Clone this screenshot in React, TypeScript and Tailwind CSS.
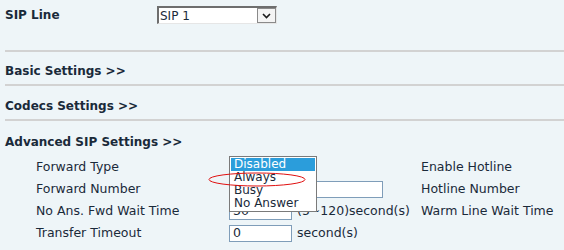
import React from "react";

const font = { fontFamily: '"DejaVu Sans", Verdana, sans-serif' };

function Input({ w, value }: { w: string; value?: string }) {
  return (
    <div
      className={`${w} h-[17px] bg-white border border-[#7f9db9] flex items-center pl-[3px] text-[12.5px] text-[#1a2a3a] leading-none`}
    >
      {value}
    </div>
  );
}

export default function App() {
  return (
    <div
      className="relative w-[564px] h-[250px] bg-[#eef5f8] overflow-hidden text-[#1a2a3a]"
      style={font}
    >
      {/* SIP Line row */}
      <div className="flex items-center h-[18px] mt-[6px] pl-[5px]">
        <div className="w-[152px] text-[12px] font-bold">SIP Line</div>
        <div className="flex w-[120px] h-[18px] border-t-2 border-l-2 border-t-[#6e6e6e] border-l-[#6e6e6e] border-b border-r border-b-[#e6e6e6] border-r-[#e6e6e6] bg-white">
          <div className="flex-1 text-[12px] leading-none flex items-center pl-[1px]">SIP 1</div>
          <div className="w-[19px] h-full bg-[#f4f4f4] border border-[#8a8a8a] flex items-center justify-center">
            <svg width="9" height="6" viewBox="0 0 9 6">
              <path d="M1 1 L4.5 4.5 L8 1" stroke="#1a1a1a" strokeWidth="1.6" fill="none" />
            </svg>
          </div>
        </div>
      </div>

      {/* lines and sections */}
      <div className="mt-[26px] ml-[5px] h-[2px] bg-[#d2d2d2]" />
      <div className="h-[32px] pl-[5px] pt-[12px] text-[12px] font-bold leading-[14px]">Basic Settings &gt;&gt;</div>
      <div className="ml-[5px] h-[2px] bg-[#d2d2d2]" />
      <div className="h-[33px] pl-[5px] pt-[13px] text-[12px] font-bold leading-[14px]">Codecs Settings &gt;&gt;</div>
      <div className="ml-[5px] h-[2px] bg-[#d2d2d2]" />
      <div className="h-[35px] pl-[5px] pt-[14px] text-[12px] font-bold leading-[14px]">Advanced SIP Settings &gt;&gt;</div>

      {/* advanced rows */}
      <div className="grid grid-cols-[193px_192px_1fr] pl-[36px] text-[12.5px] auto-rows-[22px] items-center">
        <div>Forward Type</div>
        <div />
        <div>Enable Hotline</div>

        <div>Forward Number</div>
        <div><Input w="w-[154px]" /></div>
        <div>Hotline Number</div>

        <div>No Ans. Fwd Wait Time</div>
        <div className="flex items-center gap-[5px]">
          <Input w="w-[63px]" value="30" />
          <span>(5~120)second(s)</span>
        </div>
        <div>Warm Line Wait Time</div>

        <div>Transfer Timeout</div>
        <div className="flex items-center gap-[5px]">
          <Input w="w-[63px]" value="0" />
          <span>second(s)</span>
        </div>
        <div />
      </div>

      {/* open dropdown list */}
      <div className="absolute left-[229px] top-[156px] w-[88px] h-[56px] bg-white border border-[#7a7a7a] text-[12px] leading-[13px] pt-[1px] px-[1px]">
        <div className="bg-[#2b9ddb] text-white pl-[3px] h-[13px]">Disabled</div>
        <div className="pl-[3px] h-[13px]">Always</div>
        <div className="pl-[3px] h-[13px]">Busy</div>
        <div className="pl-[3px] h-[13px]">No Answer</div>
      </div>

      {/* red ellipse annotation */}
      <svg className="absolute left-0 top-0 pointer-events-none" width="564" height="250">
        <ellipse cx="257" cy="179.5" rx="48" ry="6.5" fill="none" stroke="#e01010" strokeWidth="1" />
      </svg>
    </div>
  );
}
